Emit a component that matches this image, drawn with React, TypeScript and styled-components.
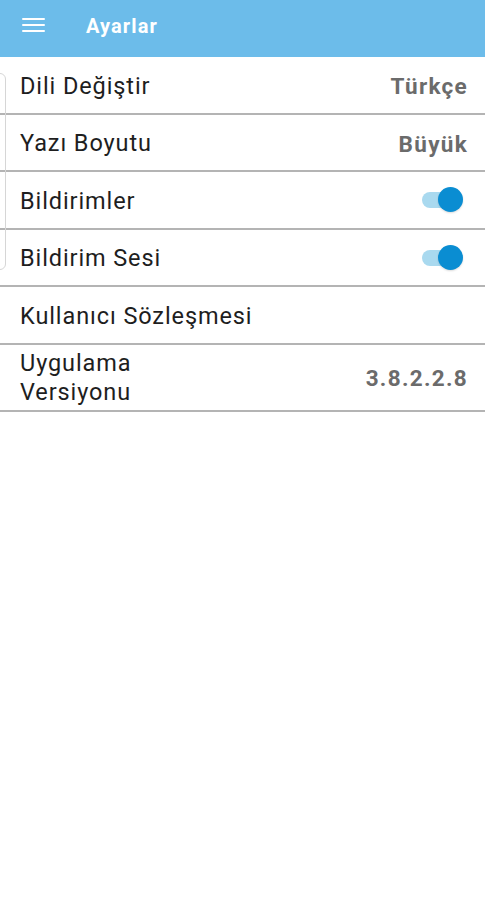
import React, { useState } from 'react'
import styled, { createGlobalStyle } from 'styled-components'

const GlobalStyle = createGlobalStyle`
  html, body {
    margin: 0;
    padding: 0;
    background: #fff;
    font-family: Roboto, "Liberation Sans", sans-serif;
  }
`

const Page = styled.div`
  position: relative;
  width: 485px;
  min-height: 900px;
  background: #fff;
  overflow: hidden;
`

const Header = styled.header`
  height: 57px;
  background: #6cbcea;
  display: flex;
  align-items: center;
  padding-left: 22px;
  box-sizing: border-box;
`

const MenuButton = styled.div`
  width: 23px;
  display: flex;
  flex-direction: column;
  gap: 3.5px;
  margin-right: 41px;
  margin-top: -7px;

  span {
    display: block;
    height: 2.5px;
    background: #fff;
    border-radius: 1px;
  }
`

const Title = styled.h1`
  margin: 0;
  margin-top: -6px;
  color: #fff;
  font-size: 20px;
  font-weight: 700;
  letter-spacing: 1.1px;
`

const List = styled.div`
  display: flex;
  flex-direction: column;
`

const Row = styled.div<{ $tall?: boolean }>`
  display: flex;
  align-items: center;
  justify-content: space-between;
  height: ${p => (p.$tall ? '63px' : '53px')};
  padding: ${p => (p.$tall ? '2px' : '2.5px')} 17px 0 20px;
  border-bottom: 2px solid #b4b4b4;
  box-sizing: content-box;
`

const Label = styled.span`
  flex: 1;
  font-size: 23.5px;
  letter-spacing: 0.9px;
  color: #1e1e1e;
  line-height: 29px;
`

const Value = styled.span`
  flex: 1;
  text-align: right;
  font-size: 22.5px;
  font-weight: 700;
  letter-spacing: 1.3px;
  color: #6b6b6b;
`

const Track = styled.button<{ $on: boolean }>`
  position: relative;
  width: 44px;
  height: 26px;
  margin: -2px 2px 0 0;
  padding: 0;
  border: none;
  background: transparent;
  cursor: pointer;

  &::before {
    content: '';
    position: absolute;
    left: 0;
    top: 5px;
    width: 34px;
    height: 16px;
    border-radius: 8px;
    background: ${p => (p.$on ? '#a9d9ef' : '#cfcfcf')};
  }

  &::after {
    content: '';
    position: absolute;
    top: 0;
    left: ${p => (p.$on ? '16px' : '-4px')};
    width: 25px;
    height: 25px;
    border-radius: 50%;
    background: ${p => (p.$on ? '#0a8dd2' : '#f2f2f2')};
    box-shadow: 0 1px 2px rgba(0, 0, 0, 0.15);
  }
`

const DrawerEdge = styled.div`
  position: absolute;
  left: -20px;
  top: 73px;
  width: 24px;
  height: 195px;
  border: 1px solid #d6d6d6;
  border-radius: 0 6px 6px 0;
  pointer-events: none;
`

const Toggle = ({ initial }: { initial: boolean }) => {
  const [on, setOn] = useState(initial)
  return <Track $on={on} onClick={() => setOn(!on)} aria-pressed={on} />
}

const App = () => {
  return (
    <>
      <GlobalStyle />
      <Page>
        <Header>
          <MenuButton>
            <span />
            <span />
            <span />
          </MenuButton>
          <Title>Ayarlar</Title>
        </Header>
        <List>
          <Row>
            <Label>Dili Değiştir</Label>
            <Value>Türkçe</Value>
          </Row>
          <Row>
            <Label>Yazı Boyutu</Label>
            <Value>Büyük</Value>
          </Row>
          <Row>
            <Label>Bildirimler</Label>
            <Toggle initial />
          </Row>
          <Row>
            <Label>Bildirim Sesi</Label>
            <Toggle initial />
          </Row>
          <Row>
            <Label>Kullanıcı Sözleşmesi</Label>
          </Row>
          <Row $tall>
            <Label>Uygulama Versiyonu</Label>
            <Value>3.8.2.2.8</Value>
          </Row>
        </List>
        <DrawerEdge />
      </Page>
    </>
  )
}

export default App
